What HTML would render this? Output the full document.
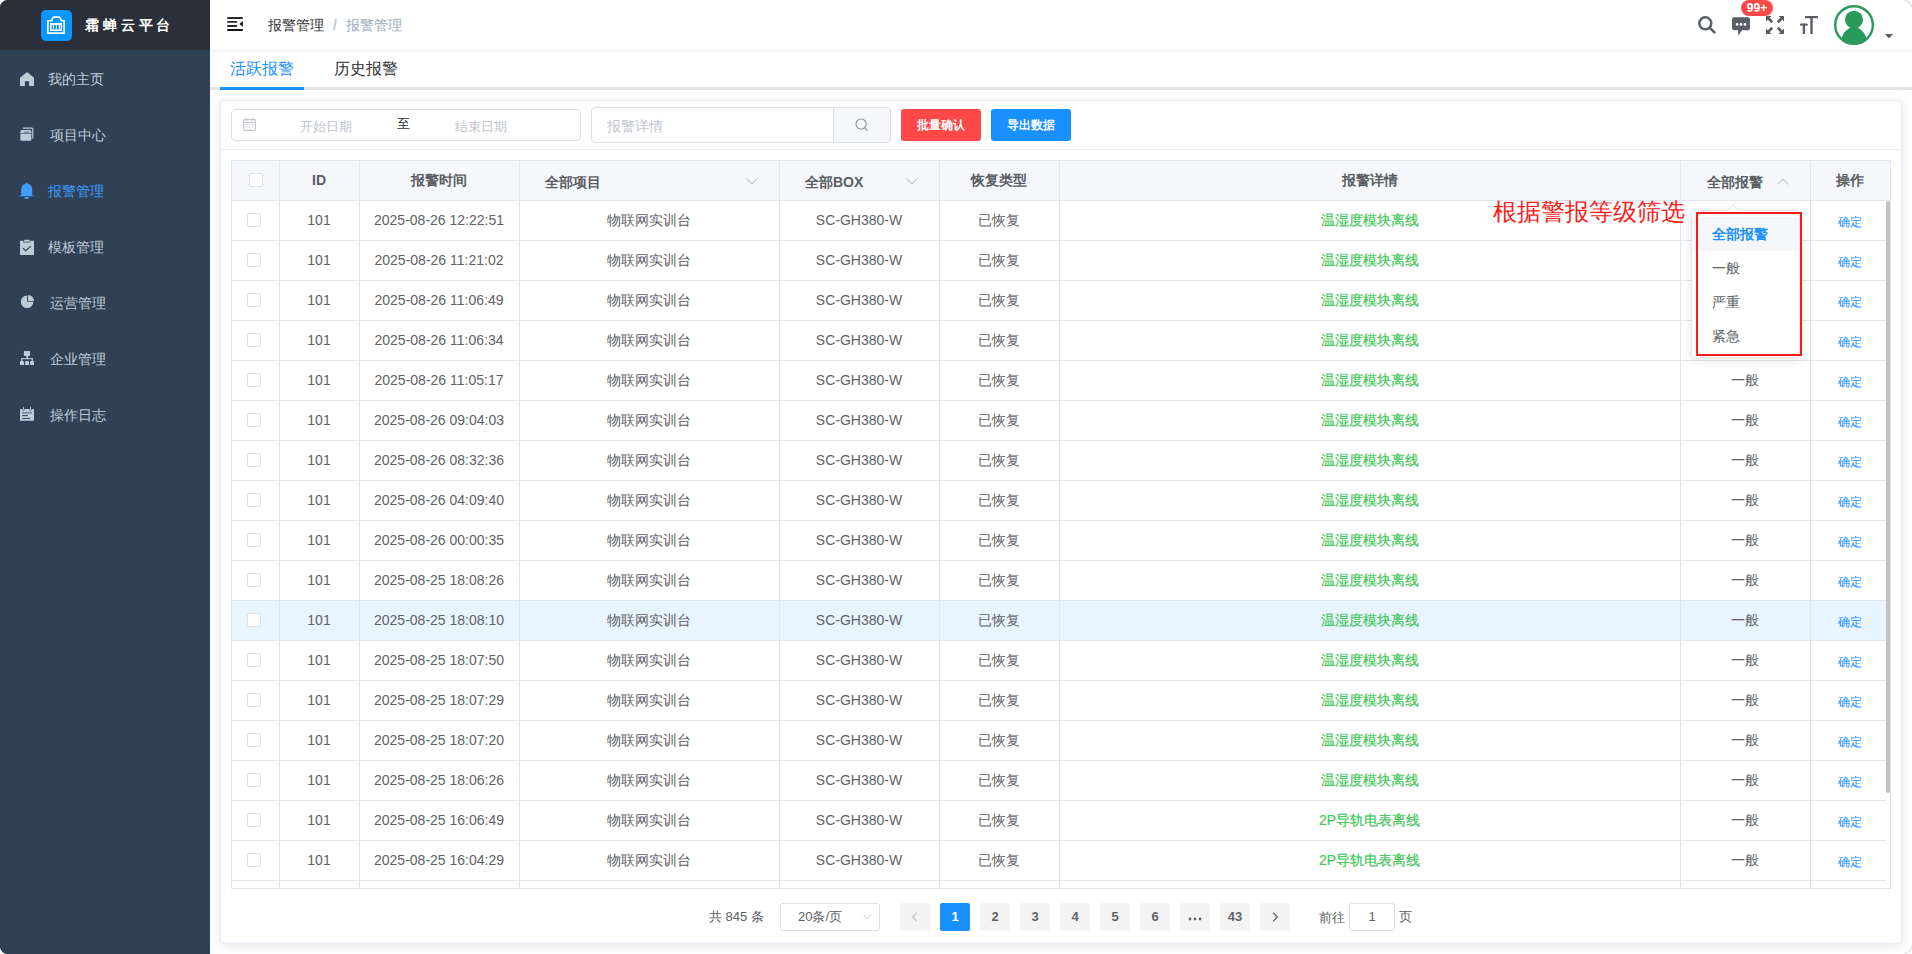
<!DOCTYPE html>
<html><head><meta charset="utf-8">
<style>
*{box-sizing:border-box;margin:0;padding:0}
html,body{width:1912px;height:954px;overflow:hidden;background:#fff;font-family:"Liberation Sans",sans-serif;color:#606266;font-size:14px}
.abs{position:absolute}
#side{position:absolute;left:0;top:0;width:210px;height:954px;background:#304156}
#logo{position:absolute;left:0;top:0;width:210px;height:50px;background:#2b2f3a}
#logo .box{position:absolute;left:41px;top:10px;width:31px;height:31px;border-radius:5px;background:#0a96ff}
#logo .t{position:absolute;left:85px;top:15px;font-size:14px;font-weight:bold;color:#fff;letter-spacing:3.85px;line-height:20px}
.mi{position:absolute;left:0;width:210px;height:56px;color:#bfcbd9;font-size:14px}
.mi .ic{position:absolute;left:20px;top:21px;width:14px;height:14px}
.mi .tx{position:absolute;top:18px;line-height:20px}
.mi.act{color:#409eff}
#nav{position:absolute;left:210px;top:0;width:1702px;height:50px;background:#fff;box-shadow:0 1px 4px rgba(0,21,41,.08)}
#tabs{position:absolute;left:210px;top:50px;width:1702px;height:40px}
#card{position:absolute;left:220px;top:100px;width:1682px;height:844px;border:1px solid #e6ebf5;border-radius:4px;background:#fff;box-shadow:0 2px 12px 0 rgba(0,0,0,.1)}
.cb{width:14px;height:14px;border:1px solid #dcdfe6;border-radius:2px;background:#fff}
</style></head><body>
<div id="side">
  <div id="logo">
    <div class="box"></div>
    <svg class="abs" style="left:47px;top:16px" width="18" height="18" viewBox="0 0 18 18"><path d="M0.9 17.1 V4.7 H4.9 V3.6 L6.5 1.1 H12.5 L14.1 3.6 V4.7 H17.1 V17.1 Z" fill="none" stroke="#fff" stroke-width="1.6"/><rect x="3.8" y="7.8" width="10.5" height="6.4" fill="none" stroke="#fff" stroke-width="1.6"/><rect x="3.5" y="7" width="11" height="2" fill="#fff"/><path d="M5.9 8.5 H7 V12.6 L6.45 13.4 L5.9 12.6 Z M8.9 8.5 H10 V12.6 L9.45 13.4 L8.9 12.6 Z M11.9 8.5 H13 V12.6 L12.45 13.4 L11.9 12.6 Z" fill="#fff"/></svg>
    <div class="t">霜蝉云平台</div>
  </div>
  <div class="mi" style="top:51px"><span class="tx" style="left:48px">我的主页</span></div>
  <div class="mi" style="top:107px"><span class="tx" style="left:50px">项目中心</span></div>
  <div class="mi act" style="top:163px"><span class="tx" style="left:48px">报警管理</span></div>
  <div class="mi" style="top:219px"><span class="tx" style="left:48px">模板管理</span></div>
  <div class="mi" style="top:275px"><span class="tx" style="left:50px">运营管理</span></div>
  <div class="mi" style="top:331px"><span class="tx" style="left:50px">企业管理</span></div>
  <div class="mi" style="top:387px"><span class="tx" style="left:50px">操作日志</span></div>
<svg class="abs" style="left:20px;top:72px" width="14" height="14" viewBox="0 0 14 14"><path d="M7 0 L14 5.8 V14 H9.1 V9.3 H4.9 V14 H0 V5.8 Z" fill="#bfcbd9"/></svg>
<svg class="abs" style="left:20px;top:127px" width="14" height="14" viewBox="0 0 14 14"><path d="M2.8 1.1 H11.9 Q12.8 1.1 12.8 2 V11.6" fill="none" stroke="#bfcbd9" stroke-width="1.2"/><rect x="0.3" y="2.9" width="11.1" height="10.9" rx="1.6" fill="#bfcbd9"/><path d="M0.3 6.3 H11.4" stroke="#304156" stroke-width="0.9" opacity="0.8"/><rect x="4.4" y="4.4" width="4.4" height="1.3" fill="#304156" opacity="0.55"/></svg>
<svg class="abs" style="left:19px;top:182px" width="16" height="17" viewBox="0 -0.5 16 17"><path d="M7.7 0 Q8.3 0 8.7 1.2 Q13.2 2.2 13.2 7.2 V12.5 L15.3 13.4 V13.8 H0 V13.4 L2.2 12.5 V7.2 Q2.2 2.2 6.7 1.2 Q7.1 0 7.7 0 Z" fill="#409eff"/><path d="M5.2 14.6 H10.2 Q9.8 16.6 7.7 16.6 Q5.6 16.6 5.2 14.6 Z" fill="#409eff"/></svg>
<svg class="abs" style="left:20px;top:239px" width="14" height="17" viewBox="0 0 14 17"><rect x="0" y="1.8" width="14" height="14.2" fill="#bfcbd9"/><rect x="3.4" y="0.2" width="7" height="3.2" fill="#304156"/><rect x="4.1" y="0.8" width="5.8" height="1.9" fill="#bfcbd9"/><path d="M3 9.2 L5.7 11.6 L10.9 7.1" fill="none" stroke="#304156" stroke-width="1.2"/></svg>
<svg class="abs" style="left:20px;top:294px" width="15" height="15" viewBox="0 0 15 15"><path d="M7.1 1.5 A6.3 6.3 0 1 0 13.4 7.8 H7.1 Z" fill="#bfcbd9"/><path d="M8 1 A6 6 0 0 1 14 7 H8 Z" fill="#bfcbd9"/></svg>
<svg class="abs" style="left:20px;top:351px" width="14" height="14" viewBox="0 0 14 14" fill="#bfcbd9"><rect x="3.8" y="0" width="6.3" height="4.9" rx="0.8"/><rect x="6.3" y="4.9" width="1.7" height="3"/><rect x="1.2" y="7.1" width="11.6" height="1.1"/><rect x="1.2" y="7.1" width="1.1" height="3"/><rect x="11.7" y="7.1" width="1.1" height="3"/><rect x="0" y="10" width="4" height="4" rx="0.4"/><rect x="5.1" y="10" width="3.9" height="4" rx="0.4"/><rect x="10" y="10" width="4" height="4" rx="0.4"/></svg>
<svg class="abs" style="left:20px;top:406px" width="14" height="15" viewBox="0 0 14 15"><rect x="0" y="3.1" width="14" height="11.7" rx="0.6" fill="#bfcbd9"/><rect x="2.6" y="0.4" width="1.7" height="4.2" fill="#304156"/><rect x="9.7" y="0.4" width="1.7" height="4.2" fill="#304156"/><rect x="3" y="0.8" width="0.9" height="3" fill="#bfcbd9"/><rect x="10.1" y="0.8" width="0.9" height="3" fill="#bfcbd9"/><rect x="2.2" y="6" width="9.8" height="1.7" fill="#7a889b"/><rect x="2.2" y="9.1" width="5.6" height="1" fill="#304156"/><rect x="2.2" y="12" width="7.8" height="0.9" fill="#304156"/></svg>
</div>
<div id="nav">
  <svg class="abs" style="left:17px;top:17px" width="16" height="14" viewBox="0 0 16 14"><rect x="0.2" y="0" width="15.7" height="1.9" rx="0.4" fill="#2a2a2a"/><rect x="0.2" y="4" width="9.9" height="1.8" rx="0.6" fill="#2a2a2a"/><rect x="0.2" y="8.1" width="9.9" height="1.8" rx="0.6" fill="#2a2a2a"/><rect x="0.2" y="12.1" width="15.7" height="1.8" rx="0.4" fill="#111"/><path d="M15.9 4 L12.3 6.9 L15.9 9.8 Z" fill="#111"/></svg>
  <div class="abs" style="left:58px;top:15px;line-height:20px;font-size:14px;color:#303133">报警管理<span style="color:#c0c4cc;margin:0 9px 0 9px;font-weight:bold">/</span><span style="color:#97a8be">报警管理</span></div>
  <svg class="abs" style="left:1488px;top:16px" width="18" height="18" viewBox="0 0 18 18"><circle cx="7.3" cy="7.3" r="6" fill="none" stroke="#5a5e66" stroke-width="2.5"/><path d="M11.6 11.6 L16.4 16.4" stroke="#5a5e66" stroke-width="2.6" stroke-linecap="round"/></svg>
  <svg class="abs" style="left:1522px;top:17px" width="18" height="19" viewBox="0 0 18 19"><path d="M2 0.2 H16 Q18 0.2 18 2.2 V11.2 Q18 13.2 16 13.2 H10.2 L6.3 18.6 L6.1 13.2 H2 Q0 13.2 0 11.2 V2.2 Q0 0.2 2 0.2 Z" fill="#5a5e66"/><circle cx="5.1" cy="7.4" r="1.3" fill="#fff"/><circle cx="9" cy="7.4" r="1.3" fill="#fff"/><circle cx="12.9" cy="7.4" r="1.3" fill="#fff"/></svg>
  <div class="abs" style="left:1531px;top:0px;width:32px;height:16px;border-radius:8px;background:#ff4949;color:#fff;font-size:12px;font-weight:bold;line-height:16px;text-align:center">99+</div>
  <svg class="abs" style="left:1556px;top:16px" width="18" height="18" viewBox="0 0 18 18" fill="#5a5e66"><path d="M0 0 H5.5 L3.7 1.8 L7.2 5.3 L5.3 7.2 L1.8 3.7 L0 5.5 Z"/><path d="M18 0 V5.5 L16.2 3.7 L12.7 7.2 L10.8 5.3 L14.3 1.8 L12.5 0 Z"/><path d="M0 18 V12.5 L1.8 14.3 L5.3 10.8 L7.2 12.7 L3.7 16.2 L5.5 18 Z"/><path d="M18 18 H12.5 L14.3 16.2 L10.8 12.7 L12.7 10.8 L16.2 14.3 L18 12.5 Z"/></svg>
  <svg class="abs" style="left:1590px;top:16px" width="18" height="18" viewBox="0 0 18 18" fill="#5a5e66"><rect x="5" y="0" width="13" height="2.2"/><rect x="10.3" y="0" width="2.4" height="18"/><rect x="0" y="7.6" width="7.8" height="2"/><rect x="2.7" y="7.6" width="2.4" height="10.4"/></svg>
  <svg class="abs" style="left:1624px;top:5px" width="40" height="40" viewBox="0 0 40 40"><defs><clipPath id="avc"><circle cx="20" cy="20" r="18.6"/></clipPath></defs><circle cx="20" cy="20" r="19" fill="#fff"/><g clip-path="url(#avc)"><ellipse cx="20" cy="39.2" rx="13.3" ry="16.9" fill="#2a9a5c"/></g><circle cx="20" cy="14.7" r="9" fill="#2a9a5c"/><circle cx="20" cy="20" r="18.8" fill="none" stroke="#2a9a5c" stroke-width="2.4"/></svg>
  <svg class="abs" style="left:1675px;top:34px" width="8" height="5" viewBox="0 0 8 5"><path d="M0 0 H8 L4 4.5 Z" fill="#5a5e66"/></svg>
</div>
<div id="tabs">
  <div class="abs" style="left:0px;top:37px;width:1702px;height:3px;background:#e4e4e4"></div>
  <div class="abs" style="left:10px;top:37px;width:84px;height:3px;background:#1890ff"></div>
  <div class="abs" style="left:20px;top:8px;font-size:16px;line-height:22px;color:#1890ff">活跃报警</div>
  <div class="abs" style="left:124px;top:8px;font-size:16px;line-height:22px;color:#303133">历史报警</div>
</div>
<div id="card"></div>
<div class="abs" style="left:231px;top:109px;width:350px;height:32px;border:1px solid #dcdfe6;border-radius:4px;background:#fff"></div>
<svg class="abs" style="left:243px;top:118px" width="13" height="13" viewBox="0 0 13 13"><rect x="0.6" y="1.6" width="11.8" height="10.8" rx="0.8" fill="none" stroke="#c0c4cc" stroke-width="1.1"/><path d="M0.6 4.4 H12.4" stroke="#c0c4cc" stroke-width="1"/><path d="M3.5 0.3 V2.6 M9.5 0.3 V2.6" stroke="#c0c4cc" stroke-width="1.1"/><path d="M2.6 6.6 H4.2 M5.7 6.6 H7.3 M8.8 6.6 H10.4 M2.6 9 H4.2 M5.7 9 H7.3 M8.8 9 H10.4" stroke="#c0c4cc" stroke-width="1"/></svg>
<div class="abs" style="left:300px;top:118px;font-size:13px;line-height:18px;color:#c0c4cc">开始日期</div>
<div class="abs" style="left:397px;top:115px;font-size:13px;line-height:18px;color:#303133">至</div>
<div class="abs" style="left:455px;top:118px;font-size:13px;line-height:18px;color:#c0c4cc">结束日期</div>
<div class="abs" style="left:591px;top:107px;width:300px;height:36px;border:1px solid #dcdfe6;border-radius:4px;background:#fff;overflow:hidden"><div class="abs" style="left:241px;top:0;width:58px;height:34px;background:#f5f7fa;border-left:1px solid #dcdfe6"></div></div>
<div class="abs" style="left:607px;top:116px;font-size:14px;line-height:20px;color:#c0c4cc">报警详情</div>
<svg class="abs" style="left:855px;top:118px" width="14" height="14" viewBox="0 0 14 14"><circle cx="6.1" cy="6.1" r="5.1" fill="none" stroke="#909399" stroke-width="1.1"/><path d="M9.8 9.8 L12.3 12.3" stroke="#909399" stroke-width="1.2" stroke-linecap="round"/></svg>
<div class="abs" style="left:901px;top:109px;width:80px;height:32px;border-radius:3px;background:#ff4949;color:#fff;font-size:12px;line-height:32px;text-align:center;font-weight:bold">批量确认</div>
<div class="abs" style="left:991px;top:109px;width:80px;height:32px;border-radius:3px;background:#1890ff;color:#fff;font-size:12px;line-height:32px;text-align:center;font-weight:bold">导出数据</div>
<div class="abs" style="left:221px;top:149px;width:1680px;height:1px;background:#ebeef5"></div>
<div class="abs" style="left:231px;top:160px;width:1660px;height:729px;border:1px solid #dfe6ec;border-bottom:1px solid #dfe6ec;background:#fff"></div>
<div class="abs" style="left:232px;top:161px;width:1658px;height:39px;background:#f5f7fa"></div>
<div class="abs" style="left:232px;top:200px;width:1658px;height:1px;background:#dfe6ec"></div>
<div class="abs" style="left:232px;top:240px;width:1654px;height:1px;background:#dfe6ec"></div>
<div class="abs" style="left:232px;top:280px;width:1654px;height:1px;background:#dfe6ec"></div>
<div class="abs" style="left:232px;top:320px;width:1654px;height:1px;background:#dfe6ec"></div>
<div class="abs" style="left:232px;top:360px;width:1654px;height:1px;background:#dfe6ec"></div>
<div class="abs" style="left:232px;top:400px;width:1654px;height:1px;background:#dfe6ec"></div>
<div class="abs" style="left:232px;top:440px;width:1654px;height:1px;background:#dfe6ec"></div>
<div class="abs" style="left:232px;top:480px;width:1654px;height:1px;background:#dfe6ec"></div>
<div class="abs" style="left:232px;top:520px;width:1654px;height:1px;background:#dfe6ec"></div>
<div class="abs" style="left:232px;top:560px;width:1654px;height:1px;background:#dfe6ec"></div>
<div class="abs" style="left:232px;top:600px;width:1654px;height:1px;background:#dfe6ec"></div>
<div class="abs" style="left:232px;top:640px;width:1654px;height:1px;background:#dfe6ec"></div>
<div class="abs" style="left:232px;top:680px;width:1654px;height:1px;background:#dfe6ec"></div>
<div class="abs" style="left:232px;top:720px;width:1654px;height:1px;background:#dfe6ec"></div>
<div class="abs" style="left:232px;top:760px;width:1654px;height:1px;background:#dfe6ec"></div>
<div class="abs" style="left:232px;top:800px;width:1654px;height:1px;background:#dfe6ec"></div>
<div class="abs" style="left:232px;top:840px;width:1654px;height:1px;background:#dfe6ec"></div>
<div class="abs" style="left:232px;top:880px;width:1654px;height:1px;background:#dfe6ec"></div>
<div class="abs" style="left:232px;top:601px;width:1654px;height:39px;background:#e8f4ff"></div>
<div class="abs" style="left:279px;top:161px;width:1px;height:727px;background:#dfe6ec"></div>
<div class="abs" style="left:359px;top:161px;width:1px;height:727px;background:#dfe6ec"></div>
<div class="abs" style="left:519px;top:161px;width:1px;height:727px;background:#dfe6ec"></div>
<div class="abs" style="left:779px;top:161px;width:1px;height:727px;background:#dfe6ec"></div>
<div class="abs" style="left:939px;top:161px;width:1px;height:727px;background:#dfe6ec"></div>
<div class="abs" style="left:1059px;top:161px;width:1px;height:727px;background:#dfe6ec"></div>
<div class="abs" style="left:1680px;top:161px;width:1px;height:727px;background:#dfe6ec"></div>
<div class="abs" style="left:1810px;top:161px;width:1px;height:727px;background:#dfe6ec"></div>
<div class="abs cb" style="left:249px;top:173px"></div>
<div class="abs" style="left:279px;top:170px;width:80px;text-align:center;line-height:20px;font-weight:bold;color:#5a5d63;font-size:14px">ID</div>
<div class="abs" style="left:359px;top:170px;width:160px;text-align:center;line-height:20px;font-weight:bold;color:#5a5d63;font-size:14px">报警时间</div>
<div class="abs" style="left:545px;top:172px;line-height:20px;font-weight:bold;color:#5a5d63;font-size:14px">全部项目</div>
<div class="abs" style="left:805px;top:172px;line-height:20px;font-weight:bold;color:#5a5d63;font-size:14px">全部BOX</div>
<div class="abs" style="left:939px;top:170px;width:120px;text-align:center;line-height:20px;font-weight:bold;color:#5a5d63;font-size:14px">恢复类型</div>
<div class="abs" style="left:1059px;top:170px;width:621px;text-align:center;line-height:20px;font-weight:bold;color:#5a5d63;font-size:14px">报警详情</div>
<div class="abs" style="left:1707px;top:172px;line-height:20px;font-weight:bold;color:#5a5d63;font-size:14px">全部报警</div>
<div class="abs" style="left:1810px;top:170px;width:80px;text-align:center;line-height:20px;font-weight:bold;color:#5a5d63;font-size:14px">操作</div>
<svg class="abs" style="left:746px;top:178px" width="12" height="7" viewBox="0 0 12 7"><path d="M0.7 0.7 L6 6 L11.3 0.7" fill="none" stroke="#c0c4cc" stroke-width="1.1"/></svg>
<svg class="abs" style="left:906px;top:178px" width="12" height="7" viewBox="0 0 12 7"><path d="M0.7 0.7 L6 6 L11.3 0.7" fill="none" stroke="#c0c4cc" stroke-width="1.1"/></svg>
<svg class="abs" style="left:1777px;top:178px" width="12" height="7" viewBox="0 0 12 7"><path d="M0.7 6.3 L6 1 L11.3 6.3" fill="none" stroke="#c0c4cc" stroke-width="1.1"/></svg>
<div class="abs cb" style="left:247px;top:213px"></div>
<div class="abs" style="left:279px;top:210px;width:80px;text-align:center;line-height:20px;">101</div>
<div class="abs" style="left:359px;top:210px;width:160px;text-align:center;line-height:20px;">2025-08-26 12:22:51</div>
<div class="abs" style="left:519px;top:210px;width:260px;text-align:center;line-height:20px;">物联网实训台</div>
<div class="abs" style="left:779px;top:210px;width:160px;text-align:center;line-height:20px;">SC-GH380-W</div>
<div class="abs" style="left:939px;top:210px;width:120px;text-align:center;line-height:20px;">已恢复</div>
<div class="abs" style="left:1059px;top:210px;width:621px;text-align:center;line-height:20px;color:#3fc658;-webkit-text-stroke:0.2px #3fc658">温湿度模块离线</div>
<div class="abs" style="left:1810px;top:212px;width:80px;text-align:center;line-height:20px;color:#1890ff;font-size:12px">确定</div>
<div class="abs cb" style="left:247px;top:253px"></div>
<div class="abs" style="left:279px;top:250px;width:80px;text-align:center;line-height:20px;">101</div>
<div class="abs" style="left:359px;top:250px;width:160px;text-align:center;line-height:20px;">2025-08-26 11:21:02</div>
<div class="abs" style="left:519px;top:250px;width:260px;text-align:center;line-height:20px;">物联网实训台</div>
<div class="abs" style="left:779px;top:250px;width:160px;text-align:center;line-height:20px;">SC-GH380-W</div>
<div class="abs" style="left:939px;top:250px;width:120px;text-align:center;line-height:20px;">已恢复</div>
<div class="abs" style="left:1059px;top:250px;width:621px;text-align:center;line-height:20px;color:#3fc658;-webkit-text-stroke:0.2px #3fc658">温湿度模块离线</div>
<div class="abs" style="left:1810px;top:252px;width:80px;text-align:center;line-height:20px;color:#1890ff;font-size:12px">确定</div>
<div class="abs cb" style="left:247px;top:293px"></div>
<div class="abs" style="left:279px;top:290px;width:80px;text-align:center;line-height:20px;">101</div>
<div class="abs" style="left:359px;top:290px;width:160px;text-align:center;line-height:20px;">2025-08-26 11:06:49</div>
<div class="abs" style="left:519px;top:290px;width:260px;text-align:center;line-height:20px;">物联网实训台</div>
<div class="abs" style="left:779px;top:290px;width:160px;text-align:center;line-height:20px;">SC-GH380-W</div>
<div class="abs" style="left:939px;top:290px;width:120px;text-align:center;line-height:20px;">已恢复</div>
<div class="abs" style="left:1059px;top:290px;width:621px;text-align:center;line-height:20px;color:#3fc658;-webkit-text-stroke:0.2px #3fc658">温湿度模块离线</div>
<div class="abs" style="left:1810px;top:292px;width:80px;text-align:center;line-height:20px;color:#1890ff;font-size:12px">确定</div>
<div class="abs cb" style="left:247px;top:333px"></div>
<div class="abs" style="left:279px;top:330px;width:80px;text-align:center;line-height:20px;">101</div>
<div class="abs" style="left:359px;top:330px;width:160px;text-align:center;line-height:20px;">2025-08-26 11:06:34</div>
<div class="abs" style="left:519px;top:330px;width:260px;text-align:center;line-height:20px;">物联网实训台</div>
<div class="abs" style="left:779px;top:330px;width:160px;text-align:center;line-height:20px;">SC-GH380-W</div>
<div class="abs" style="left:939px;top:330px;width:120px;text-align:center;line-height:20px;">已恢复</div>
<div class="abs" style="left:1059px;top:330px;width:621px;text-align:center;line-height:20px;color:#3fc658;-webkit-text-stroke:0.2px #3fc658">温湿度模块离线</div>
<div class="abs" style="left:1810px;top:332px;width:80px;text-align:center;line-height:20px;color:#1890ff;font-size:12px">确定</div>
<div class="abs cb" style="left:247px;top:373px"></div>
<div class="abs" style="left:279px;top:370px;width:80px;text-align:center;line-height:20px;">101</div>
<div class="abs" style="left:359px;top:370px;width:160px;text-align:center;line-height:20px;">2025-08-26 11:05:17</div>
<div class="abs" style="left:519px;top:370px;width:260px;text-align:center;line-height:20px;">物联网实训台</div>
<div class="abs" style="left:779px;top:370px;width:160px;text-align:center;line-height:20px;">SC-GH380-W</div>
<div class="abs" style="left:939px;top:370px;width:120px;text-align:center;line-height:20px;">已恢复</div>
<div class="abs" style="left:1059px;top:370px;width:621px;text-align:center;line-height:20px;color:#3fc658;-webkit-text-stroke:0.2px #3fc658">温湿度模块离线</div>
<div class="abs" style="left:1680px;top:370px;width:130px;text-align:center;line-height:20px;">一般</div>
<div class="abs" style="left:1810px;top:372px;width:80px;text-align:center;line-height:20px;color:#1890ff;font-size:12px">确定</div>
<div class="abs cb" style="left:247px;top:413px"></div>
<div class="abs" style="left:279px;top:410px;width:80px;text-align:center;line-height:20px;">101</div>
<div class="abs" style="left:359px;top:410px;width:160px;text-align:center;line-height:20px;">2025-08-26 09:04:03</div>
<div class="abs" style="left:519px;top:410px;width:260px;text-align:center;line-height:20px;">物联网实训台</div>
<div class="abs" style="left:779px;top:410px;width:160px;text-align:center;line-height:20px;">SC-GH380-W</div>
<div class="abs" style="left:939px;top:410px;width:120px;text-align:center;line-height:20px;">已恢复</div>
<div class="abs" style="left:1059px;top:410px;width:621px;text-align:center;line-height:20px;color:#3fc658;-webkit-text-stroke:0.2px #3fc658">温湿度模块离线</div>
<div class="abs" style="left:1680px;top:410px;width:130px;text-align:center;line-height:20px;">一般</div>
<div class="abs" style="left:1810px;top:412px;width:80px;text-align:center;line-height:20px;color:#1890ff;font-size:12px">确定</div>
<div class="abs cb" style="left:247px;top:453px"></div>
<div class="abs" style="left:279px;top:450px;width:80px;text-align:center;line-height:20px;">101</div>
<div class="abs" style="left:359px;top:450px;width:160px;text-align:center;line-height:20px;">2025-08-26 08:32:36</div>
<div class="abs" style="left:519px;top:450px;width:260px;text-align:center;line-height:20px;">物联网实训台</div>
<div class="abs" style="left:779px;top:450px;width:160px;text-align:center;line-height:20px;">SC-GH380-W</div>
<div class="abs" style="left:939px;top:450px;width:120px;text-align:center;line-height:20px;">已恢复</div>
<div class="abs" style="left:1059px;top:450px;width:621px;text-align:center;line-height:20px;color:#3fc658;-webkit-text-stroke:0.2px #3fc658">温湿度模块离线</div>
<div class="abs" style="left:1680px;top:450px;width:130px;text-align:center;line-height:20px;">一般</div>
<div class="abs" style="left:1810px;top:452px;width:80px;text-align:center;line-height:20px;color:#1890ff;font-size:12px">确定</div>
<div class="abs cb" style="left:247px;top:493px"></div>
<div class="abs" style="left:279px;top:490px;width:80px;text-align:center;line-height:20px;">101</div>
<div class="abs" style="left:359px;top:490px;width:160px;text-align:center;line-height:20px;">2025-08-26 04:09:40</div>
<div class="abs" style="left:519px;top:490px;width:260px;text-align:center;line-height:20px;">物联网实训台</div>
<div class="abs" style="left:779px;top:490px;width:160px;text-align:center;line-height:20px;">SC-GH380-W</div>
<div class="abs" style="left:939px;top:490px;width:120px;text-align:center;line-height:20px;">已恢复</div>
<div class="abs" style="left:1059px;top:490px;width:621px;text-align:center;line-height:20px;color:#3fc658;-webkit-text-stroke:0.2px #3fc658">温湿度模块离线</div>
<div class="abs" style="left:1680px;top:490px;width:130px;text-align:center;line-height:20px;">一般</div>
<div class="abs" style="left:1810px;top:492px;width:80px;text-align:center;line-height:20px;color:#1890ff;font-size:12px">确定</div>
<div class="abs cb" style="left:247px;top:533px"></div>
<div class="abs" style="left:279px;top:530px;width:80px;text-align:center;line-height:20px;">101</div>
<div class="abs" style="left:359px;top:530px;width:160px;text-align:center;line-height:20px;">2025-08-26 00:00:35</div>
<div class="abs" style="left:519px;top:530px;width:260px;text-align:center;line-height:20px;">物联网实训台</div>
<div class="abs" style="left:779px;top:530px;width:160px;text-align:center;line-height:20px;">SC-GH380-W</div>
<div class="abs" style="left:939px;top:530px;width:120px;text-align:center;line-height:20px;">已恢复</div>
<div class="abs" style="left:1059px;top:530px;width:621px;text-align:center;line-height:20px;color:#3fc658;-webkit-text-stroke:0.2px #3fc658">温湿度模块离线</div>
<div class="abs" style="left:1680px;top:530px;width:130px;text-align:center;line-height:20px;">一般</div>
<div class="abs" style="left:1810px;top:532px;width:80px;text-align:center;line-height:20px;color:#1890ff;font-size:12px">确定</div>
<div class="abs cb" style="left:247px;top:573px"></div>
<div class="abs" style="left:279px;top:570px;width:80px;text-align:center;line-height:20px;">101</div>
<div class="abs" style="left:359px;top:570px;width:160px;text-align:center;line-height:20px;">2025-08-25 18:08:26</div>
<div class="abs" style="left:519px;top:570px;width:260px;text-align:center;line-height:20px;">物联网实训台</div>
<div class="abs" style="left:779px;top:570px;width:160px;text-align:center;line-height:20px;">SC-GH380-W</div>
<div class="abs" style="left:939px;top:570px;width:120px;text-align:center;line-height:20px;">已恢复</div>
<div class="abs" style="left:1059px;top:570px;width:621px;text-align:center;line-height:20px;color:#3fc658;-webkit-text-stroke:0.2px #3fc658">温湿度模块离线</div>
<div class="abs" style="left:1680px;top:570px;width:130px;text-align:center;line-height:20px;">一般</div>
<div class="abs" style="left:1810px;top:572px;width:80px;text-align:center;line-height:20px;color:#1890ff;font-size:12px">确定</div>
<div class="abs cb" style="left:247px;top:613px"></div>
<div class="abs" style="left:279px;top:610px;width:80px;text-align:center;line-height:20px;">101</div>
<div class="abs" style="left:359px;top:610px;width:160px;text-align:center;line-height:20px;">2025-08-25 18:08:10</div>
<div class="abs" style="left:519px;top:610px;width:260px;text-align:center;line-height:20px;">物联网实训台</div>
<div class="abs" style="left:779px;top:610px;width:160px;text-align:center;line-height:20px;">SC-GH380-W</div>
<div class="abs" style="left:939px;top:610px;width:120px;text-align:center;line-height:20px;">已恢复</div>
<div class="abs" style="left:1059px;top:610px;width:621px;text-align:center;line-height:20px;color:#3fc658;-webkit-text-stroke:0.2px #3fc658">温湿度模块离线</div>
<div class="abs" style="left:1680px;top:610px;width:130px;text-align:center;line-height:20px;">一般</div>
<div class="abs" style="left:1810px;top:612px;width:80px;text-align:center;line-height:20px;color:#1890ff;font-size:12px">确定</div>
<div class="abs cb" style="left:247px;top:653px"></div>
<div class="abs" style="left:279px;top:650px;width:80px;text-align:center;line-height:20px;">101</div>
<div class="abs" style="left:359px;top:650px;width:160px;text-align:center;line-height:20px;">2025-08-25 18:07:50</div>
<div class="abs" style="left:519px;top:650px;width:260px;text-align:center;line-height:20px;">物联网实训台</div>
<div class="abs" style="left:779px;top:650px;width:160px;text-align:center;line-height:20px;">SC-GH380-W</div>
<div class="abs" style="left:939px;top:650px;width:120px;text-align:center;line-height:20px;">已恢复</div>
<div class="abs" style="left:1059px;top:650px;width:621px;text-align:center;line-height:20px;color:#3fc658;-webkit-text-stroke:0.2px #3fc658">温湿度模块离线</div>
<div class="abs" style="left:1680px;top:650px;width:130px;text-align:center;line-height:20px;">一般</div>
<div class="abs" style="left:1810px;top:652px;width:80px;text-align:center;line-height:20px;color:#1890ff;font-size:12px">确定</div>
<div class="abs cb" style="left:247px;top:693px"></div>
<div class="abs" style="left:279px;top:690px;width:80px;text-align:center;line-height:20px;">101</div>
<div class="abs" style="left:359px;top:690px;width:160px;text-align:center;line-height:20px;">2025-08-25 18:07:29</div>
<div class="abs" style="left:519px;top:690px;width:260px;text-align:center;line-height:20px;">物联网实训台</div>
<div class="abs" style="left:779px;top:690px;width:160px;text-align:center;line-height:20px;">SC-GH380-W</div>
<div class="abs" style="left:939px;top:690px;width:120px;text-align:center;line-height:20px;">已恢复</div>
<div class="abs" style="left:1059px;top:690px;width:621px;text-align:center;line-height:20px;color:#3fc658;-webkit-text-stroke:0.2px #3fc658">温湿度模块离线</div>
<div class="abs" style="left:1680px;top:690px;width:130px;text-align:center;line-height:20px;">一般</div>
<div class="abs" style="left:1810px;top:692px;width:80px;text-align:center;line-height:20px;color:#1890ff;font-size:12px">确定</div>
<div class="abs cb" style="left:247px;top:733px"></div>
<div class="abs" style="left:279px;top:730px;width:80px;text-align:center;line-height:20px;">101</div>
<div class="abs" style="left:359px;top:730px;width:160px;text-align:center;line-height:20px;">2025-08-25 18:07:20</div>
<div class="abs" style="left:519px;top:730px;width:260px;text-align:center;line-height:20px;">物联网实训台</div>
<div class="abs" style="left:779px;top:730px;width:160px;text-align:center;line-height:20px;">SC-GH380-W</div>
<div class="abs" style="left:939px;top:730px;width:120px;text-align:center;line-height:20px;">已恢复</div>
<div class="abs" style="left:1059px;top:730px;width:621px;text-align:center;line-height:20px;color:#3fc658;-webkit-text-stroke:0.2px #3fc658">温湿度模块离线</div>
<div class="abs" style="left:1680px;top:730px;width:130px;text-align:center;line-height:20px;">一般</div>
<div class="abs" style="left:1810px;top:732px;width:80px;text-align:center;line-height:20px;color:#1890ff;font-size:12px">确定</div>
<div class="abs cb" style="left:247px;top:773px"></div>
<div class="abs" style="left:279px;top:770px;width:80px;text-align:center;line-height:20px;">101</div>
<div class="abs" style="left:359px;top:770px;width:160px;text-align:center;line-height:20px;">2025-08-25 18:06:26</div>
<div class="abs" style="left:519px;top:770px;width:260px;text-align:center;line-height:20px;">物联网实训台</div>
<div class="abs" style="left:779px;top:770px;width:160px;text-align:center;line-height:20px;">SC-GH380-W</div>
<div class="abs" style="left:939px;top:770px;width:120px;text-align:center;line-height:20px;">已恢复</div>
<div class="abs" style="left:1059px;top:770px;width:621px;text-align:center;line-height:20px;color:#3fc658;-webkit-text-stroke:0.2px #3fc658">温湿度模块离线</div>
<div class="abs" style="left:1680px;top:770px;width:130px;text-align:center;line-height:20px;">一般</div>
<div class="abs" style="left:1810px;top:772px;width:80px;text-align:center;line-height:20px;color:#1890ff;font-size:12px">确定</div>
<div class="abs cb" style="left:247px;top:813px"></div>
<div class="abs" style="left:279px;top:810px;width:80px;text-align:center;line-height:20px;">101</div>
<div class="abs" style="left:359px;top:810px;width:160px;text-align:center;line-height:20px;">2025-08-25 16:06:49</div>
<div class="abs" style="left:519px;top:810px;width:260px;text-align:center;line-height:20px;">物联网实训台</div>
<div class="abs" style="left:779px;top:810px;width:160px;text-align:center;line-height:20px;">SC-GH380-W</div>
<div class="abs" style="left:939px;top:810px;width:120px;text-align:center;line-height:20px;">已恢复</div>
<div class="abs" style="left:1059px;top:810px;width:621px;text-align:center;line-height:20px;color:#3fc658;-webkit-text-stroke:0.2px #3fc658">2P导轨电表离线</div>
<div class="abs" style="left:1680px;top:810px;width:130px;text-align:center;line-height:20px;">一般</div>
<div class="abs" style="left:1810px;top:812px;width:80px;text-align:center;line-height:20px;color:#1890ff;font-size:12px">确定</div>
<div class="abs cb" style="left:247px;top:853px"></div>
<div class="abs" style="left:279px;top:850px;width:80px;text-align:center;line-height:20px;">101</div>
<div class="abs" style="left:359px;top:850px;width:160px;text-align:center;line-height:20px;">2025-08-25 16:04:29</div>
<div class="abs" style="left:519px;top:850px;width:260px;text-align:center;line-height:20px;">物联网实训台</div>
<div class="abs" style="left:779px;top:850px;width:160px;text-align:center;line-height:20px;">SC-GH380-W</div>
<div class="abs" style="left:939px;top:850px;width:120px;text-align:center;line-height:20px;">已恢复</div>
<div class="abs" style="left:1059px;top:850px;width:621px;text-align:center;line-height:20px;color:#3fc658;-webkit-text-stroke:0.2px #3fc658">2P导轨电表离线</div>
<div class="abs" style="left:1680px;top:850px;width:130px;text-align:center;line-height:20px;">一般</div>
<div class="abs" style="left:1810px;top:852px;width:80px;text-align:center;line-height:20px;color:#1890ff;font-size:12px">确定</div>
<div class="abs" style="left:1886px;top:201px;width:4px;height:592px;border-radius:2px;background:#c1c1c1"></div>
<div class="abs" style="left:1691px;top:210px;width:109px;height:148px;background:#fff;border:1px solid #e4e7ed;border-radius:4px;box-shadow:0 2px 12px 0 rgba(0,0,0,.1)"></div>
<svg class="abs" style="left:1727px;top:204px" width="12" height="8" viewBox="0 0 12 8"><path d="M0.5 6.6 L6 1.2 L11.5 6.6" fill="#fff" stroke="#e4e7ed" stroke-width="1"/><rect x="1" y="6.5" width="10" height="2" fill="#fff"/></svg>
<div class="abs" style="left:1692px;top:217px;width:107px;height:34px;background:#f5f7fa"></div>
<div class="abs" style="left:1712px;top:224px;line-height:20px;font-size:14px;font-weight:bold;color:#1890ff">全部报警</div>
<div class="abs" style="left:1712px;top:258px;line-height:20px;font-size:14px;color:#606266">一般</div>
<div class="abs" style="left:1712px;top:292px;line-height:20px;font-size:14px;color:#606266">严重</div>
<div class="abs" style="left:1712px;top:326px;line-height:20px;font-size:14px;color:#606266">紧急</div>
<div class="abs" style="left:1696px;top:212px;width:106px;height:144px;border:2px solid #ff1a1a"></div>
<div class="abs" style="left:1493px;top:197px;font-size:24px;line-height:30px;color:#ff1a1a">根据警报等级筛选</div>
<div class="abs" style="left:709px;top:907px;font-size:13px;line-height:20px;color:#606266">共 845 条</div>
<div class="abs" style="left:780px;top:903px;width:100px;height:28px;border:1px solid #dcdfe6;border-radius:3px"></div>
<div class="abs" style="left:798px;top:907px;font-size:13px;line-height:20px;color:#606266">20条/页</div>
<svg class="abs" style="left:863px;top:914px" width="9" height="6" viewBox="0 0 9 6"><path d="M0.5 0.6 L4.5 5 L8.5 0.6" fill="none" stroke="#c0c4cc" stroke-width="1"/></svg>
<div class="abs" style="left:900px;top:903px;width:30px;height:28px;border-radius:2px;background:#f4f4f5;color:#606266;font-size:13px;font-weight:bold;line-height:28px;text-align:center"><svg width="8" height="12" viewBox="0 0 8 12" style="margin-top:8px"><path d="M5.8 1.6 L1.8 6 L5.8 10.4" fill="none" stroke="#c0c4cc" stroke-width="1.4"/></svg></div>
<div class="abs" style="left:940px;top:903px;width:30px;height:28px;border-radius:2px;background:#1890ff;color:#fff;font-size:13px;font-weight:bold;line-height:28px;text-align:center">1</div>
<div class="abs" style="left:980px;top:903px;width:30px;height:28px;border-radius:2px;background:#f4f4f5;color:#606266;font-size:13px;font-weight:bold;line-height:28px;text-align:center">2</div>
<div class="abs" style="left:1020px;top:903px;width:30px;height:28px;border-radius:2px;background:#f4f4f5;color:#606266;font-size:13px;font-weight:bold;line-height:28px;text-align:center">3</div>
<div class="abs" style="left:1060px;top:903px;width:30px;height:28px;border-radius:2px;background:#f4f4f5;color:#606266;font-size:13px;font-weight:bold;line-height:28px;text-align:center">4</div>
<div class="abs" style="left:1100px;top:903px;width:30px;height:28px;border-radius:2px;background:#f4f4f5;color:#606266;font-size:13px;font-weight:bold;line-height:28px;text-align:center">5</div>
<div class="abs" style="left:1140px;top:903px;width:30px;height:28px;border-radius:2px;background:#f4f4f5;color:#606266;font-size:13px;font-weight:bold;line-height:28px;text-align:center">6</div>
<div class="abs" style="left:1180px;top:903px;width:30px;height:28px;border-radius:2px;background:#f4f4f5;color:#606266;font-size:13px;font-weight:bold;line-height:28px;text-align:center"><svg width="14" height="4" viewBox="0 0 14 4" style="margin-top:10px"><circle cx="2" cy="2" r="1.4" fill="#606266"/><circle cx="7" cy="2" r="1.4" fill="#606266"/><circle cx="12" cy="2" r="1.4" fill="#606266"/></svg></div>
<div class="abs" style="left:1220px;top:903px;width:30px;height:28px;border-radius:2px;background:#f4f4f5;color:#606266;font-size:13px;font-weight:bold;line-height:28px;text-align:center">43</div>
<div class="abs" style="left:1260px;top:903px;width:30px;height:28px;border-radius:2px;background:#f4f4f5;color:#606266;font-size:13px;font-weight:bold;line-height:28px;text-align:center"><svg width="8" height="12" viewBox="0 0 8 12" style="margin-top:8px"><path d="M2.2 1.6 L6.2 6 L2.2 10.4" fill="none" stroke="#606266" stroke-width="1.4"/></svg></div>
<div class="abs" style="left:1319px;top:908px;font-size:13px;line-height:20px;color:#606266">前往</div>
<div class="abs" style="left:1349px;top:903px;width:46px;height:28px;border:1px solid #dcdfe6;border-radius:3px;text-align:center;font-size:13px;line-height:26px;color:#606266">1</div>
<div class="abs" style="left:1399px;top:907px;font-size:13px;line-height:20px;color:#606266">页</div>

<svg class="abs" style="left:0;top:0" width="10" height="10" viewBox="0 0 10 10"><path d="M0 0 H7.5 A7.5 7.5 0 0 0 0 7.5 Z" fill="#fdfdfd"/><path d="M7.5 0.6 A7 7 0 0 0 0.6 7.5" fill="none" stroke="#1d2029" stroke-width="0.8" opacity="0.6"/></svg>
<svg class="abs" style="left:0;top:944px" width="10" height="10" viewBox="0 0 10 10"><path d="M0 10 H7.5 A7.5 7.5 0 0 1 0 2.5 Z" fill="#fbfbfb"/><path d="M7.5 9.4 A7 7 0 0 1 0.6 2.5" fill="none" stroke="#1d2a3c" stroke-width="0.8" opacity="0.6"/></svg>
<svg class="abs" style="left:1902px;top:0" width="10" height="10" viewBox="0 0 10 10"><path d="M10 0 H2.5 A7.5 7.5 0 0 1 10 7.5 Z" fill="#fff"/><path d="M2.5 0.5 A7.2 7.2 0 0 1 9.5 7.5" fill="none" stroke="#dcdcdc" stroke-width="1.2"/></svg>
<svg class="abs" style="left:1902px;top:944px" width="10" height="10" viewBox="0 0 10 10"><path d="M10 10 H2.5 A7.5 7.5 0 0 0 10 2.5 Z" fill="#fff"/><path d="M2.5 9.5 A7.2 7.2 0 0 0 9.5 2.5" fill="none" stroke="#dedede" stroke-width="1.1"/></svg>
</body></html>
